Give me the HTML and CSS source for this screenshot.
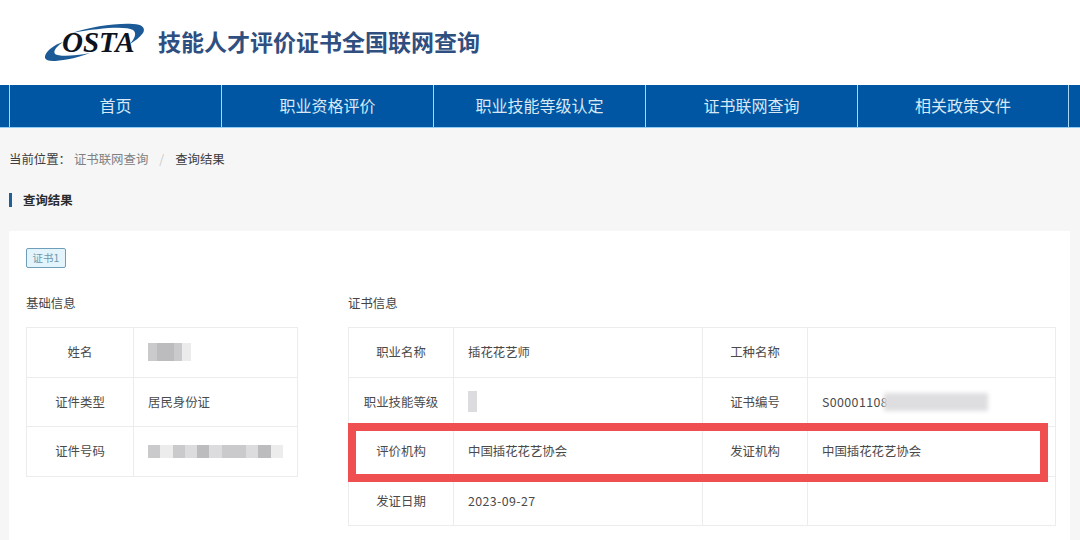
FILE: index.html
```html
<!DOCTYPE html>
<html lang="zh-CN">
<head>
<meta charset="utf-8">
<title>技能人才评价证书全国联网查询</title>
<link rel="stylesheet" href="styles.css">
</head>
<body>
<header class="site-header">
  <div class="logo">
    <svg class="logo-arc" width="104" height="44" viewBox="0 0 104 44" aria-hidden="true">
      <path d="M0 33C2 27 9 22 18 19C11 24 8 28 10 31C14 34 30 33 45 30C30 36 14 38 8 38C2 38 -1 36 0 33Z" fill="#1b5a96"/>
      <path d="M27 10C45 4 70 0 88 1C97 1 101 5 98 10C95 14 90 18 85 21C90 15 92 10 88 7C80 3 55 5 27 10Z" fill="#1b5a96"/>
    </svg>
    <span class="logo-text">OSTA</span>
  </div>
  <h1 class="site-title">技能人才评价证书全国联网查询</h1>
</header>
<nav class="main-nav">
  <a class="nav-item">首页</a>
  <a class="nav-item">职业资格评价</a>
  <a class="nav-item">职业技能等级认定</a>
  <a class="nav-item">证书联网查询</a>
  <a class="nav-item">相关政策文件</a>
</nav>
<main class="content">
  <div class="breadcrumb">
    <span class="crumb-label">当前位置：</span>
    <span class="crumb-link">证书联网查询</span>
    <span class="crumb-sep">/</span>
    <span class="crumb-current">查询结果</span>
  </div>
  <h2 class="section-title">查询结果</h2>
  <section class="card">
    <span class="tag">证书1</span>
    <div class="columns">
      <div class="col-basic">
        <h3 class="sub-title">基础信息</h3>
        <table class="info-table">
          <colgroup><col class="w-107"><col></colgroup>
          <tr>
            <th>姓名</th>
            <td><span class="mosaic mosaic-name"><i class="g2"></i><i class="g1"></i><i class="g1"></i><i class="g2"></i><i class="g0"></i></span></td>
          </tr>
          <tr><th>证件类型</th><td>居民身份证</td></tr>
          <tr>
            <th>证件号码</th>
            <td><span class="mosaic mosaic-id"><i class="g2"></i><i class="g0"></i><i class="g2"></i><i class="g3"></i><i class="g1"></i><i class="g3"></i><i class="g2"></i><i class="g2"></i><i class="g3"></i><i class="g1"></i><i class="g0"></i></span></td>
          </tr>
        </table>
      </div>
      <div class="col-cert">
        <h3 class="sub-title">证书信息</h3>
        <div class="table-wrap">
          <table class="info-table">
            <colgroup><col class="w-105"><col class="w-249"><col class="w-105"><col></colgroup>
            <tr><th>职业名称</th><td>插花花艺师</td><th>工种名称</th><td></td></tr>
            <tr>
              <th>职业技能等级</th>
              <td><span class="mosaic mosaic-level"><i class="g3"></i></span></td>
              <th>证书编号</th>
              <td class="cert-no latin">S00001108<span class="smudge"></span></td>
            </tr>
            <tr><th>评价机构</th><td>中国插花花艺协会</td><th>发证机构</th><td>中国插花花艺协会</td></tr>
            <tr><th>发证日期</th><td class="latin">2023-09-27</td><th></th><td></td></tr>
          </table>
          <div class="highlight"></div>
        </div>
      </div>
    </div>
  </section>
</main>
</body>
</html>
```
FILE: styles.css
```css
* { box-sizing: border-box; }
html, body { margin: 0; height: 540px; overflow: hidden; }
body {
  background: #f6f6f7;
  color: #4a4a4a;
  font: 12.4px/1.5 "Noto Sans CJK SC", "Liberation Sans", sans-serif;
}
.site-header {
  height: 85px;
  background: #fff;
  display: flex;
  align-items: center;
  padding: 0 0 0 45px;
  gap: 9px;
}
.logo { position: relative; width: 104px; height: 44px; margin-top: 5px; }
.logo-arc { display: block; }
.logo-text {
  position: absolute;
  left: 17px;
  top: 3px;
  font: italic bold 29px/32px "Liberation Serif", serif;
  color: #0c1220;
}
.site-title {
  margin: -4px 0 0;
  font-size: 23px;
  line-height: 32px;
  font-weight: 700;
  color: #2f4f80;
}
.main-nav {
  height: 43px;
  background: #0056a3;
  border-bottom: 1px solid #8fcdf2;
  padding-left: 9px;
  display: flex;
}
.nav-item {
  width: 212px;
  border-left: 1px solid #a9d8f5;
  color: #d8e8f5;
  font-size: 16px;
  line-height: 41px;
  text-align: center;
}
.nav-item:last-child { border-right: 1px solid #a9d8f5; }
.content { padding: 0 10px 0 9px; }
.breadcrumb {
  padding-top: 22px;
  line-height: 18px;
  display: flex;
  color: #3d3d3d;
}
.crumb-link { color: #808080; margin-left: 3px; }
.crumb-sep { color: #c8c8c8; margin: 0 11px 0 11px; }
.section-title {
  margin: 25px 0 0;
  border-left: 3px solid #1f5f9a;
  height: 14px;
  padding-left: 11px;
  font-size: 12.4px;
  line-height: 14px;
  font-weight: 700;
  color: #2b2b2b;
}
.card {
  margin-top: 24px;
  background: #fff;
  padding: 17px 14px 0 17px;
  height: 320px;
}
.tag {
  display: block;
  width: 40px;
  height: 20px;
  border: 1px solid #6f9fb8;
  border-radius: 2px;
  background: #e3f4fc;
  color: #6f98ad;
  font-size: 10.5px;
  line-height: 18px;
  text-align: center;
}
.columns { display: flex; margin-top: 26px; gap: 50px; }
.col-basic { width: 272px; }
.col-cert { width: 708px; }
.sub-title {
  margin: 0 0 14px;
  font-size: 12.4px;
  line-height: 19px;
  font-weight: 400;
  color: #444;
}
.table-wrap { position: relative; }
.info-table {
  width: 100%;
  table-layout: fixed;
  border-collapse: collapse;
  border: 1px solid #e8e8e8;
}
.w-107 { width: 107px; }
.w-105 { width: 105px; }
.w-249 { width: 249px; }
.info-table th, .info-table td {
  height: 49.6px;
  border: 1px solid #ececec;
  padding: 0;
  font-size: 12.4px;
  font-weight: 400;
  color: #4a4a4a;
}
.info-table th { text-align: center; }
.info-table td { padding-left: 14px; }
.info-table .latin { letter-spacing: 0.4px; }
.mosaic { display: flex; filter: blur(0.6px); }
.mosaic i { flex: 1; display: block; }
.mosaic-name { width: 43px; height: 18px; }
.mosaic-id { width: 135px; height: 13px; }
.mosaic-level { width: 9px; height: 21px; }
.g0 { background: #ececec; }
.g1 { background: #bcbcbe; }
.g2 { background: #cacacc; }
.g3 { background: #dcdcde; }
.cert-no { position: relative; }
.smudge {
  position: absolute;
  left: 76px;
  top: 15px;
  width: 104px;
  height: 18px;
  background: #dedee0;
  filter: blur(2px);
}
.highlight {
  position: absolute;
  left: 0;
  top: 96px;
  width: 700px;
  height: 59px;
  border: 8px solid #ef4f50;
}
```
